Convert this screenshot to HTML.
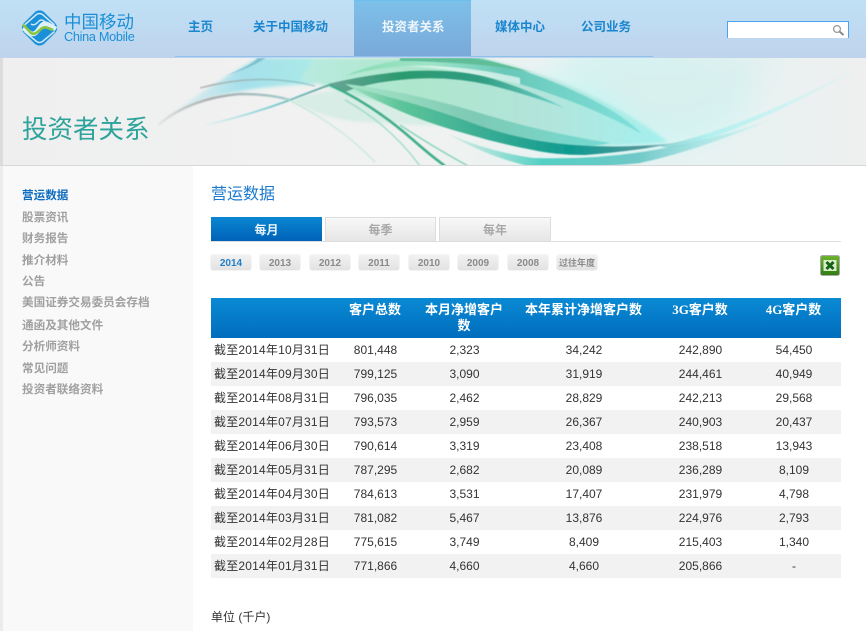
<!DOCTYPE html>
<html lang="zh"><head><meta charset="utf-8"><title>营运数据</title>
<style>
html,body{margin:0;padding:0;background:#fff}
body{width:866px;height:631px;position:relative;overflow:hidden;font-family:"Liberation Sans","Noto Sans CJK SC",sans-serif}
.a{position:absolute;white-space:nowrap}
.nav{top:19px;font-size:12.5px;line-height:16px;font-weight:bold;color:#1a86cf}
.side{left:22px;font-size:11.6px;line-height:14px;font-weight:bold;color:#a0a0a0}
.tab{top:217px;height:24px;line-height:27px;text-align:center;font-size:12px;font-weight:bold;box-sizing:border-box}
.off{background:linear-gradient(#f8f8f8,#e6e6e6);border:1px solid #ddd;border-bottom:0;color:#a8a8a8;line-height:25px}
.yr{top:255px;height:15px;line-height:17px;text-align:center;font-size:10px;font-weight:bold;color:#8a8a8a;background:linear-gradient(#f2f2f2,#e2e2e2);border-radius:2px;box-shadow:0 0 1px #bbb}
table{position:absolute;left:211px;top:298px;width:630px;border-collapse:collapse;table-layout:fixed;font-size:12px;color:#333}
th{height:36px;padding:4px 0 0;vertical-align:top;color:#fff;line-height:16px;font-size:13px;text-align:center;font-family:"Liberation Serif","Noto Sans CJK SC",serif}
thead tr{background:linear-gradient(#0a8ad4,#006dbd)}
td{height:24px;padding:0 0 0 1px;text-align:center;line-height:24px}
td:first-child{text-align:left;padding-left:3px;letter-spacing:.2px}
tbody tr:nth-child(even){background:#f2f2f2}
</style></head><body>

<div class="a" style="left:0;top:0;width:866px;height:58px;background:linear-gradient(#bfe1f5,#bfd3ec)"></div>
<svg class="a" style="left:20px;top:9px" width="40" height="38" viewBox="0 0 40 38">
<rect x="5" y="4.5" width="29" height="29" rx="7" fill="#1a90d9" transform="rotate(45 19.5 19)"/>
<g fill="none">
<path d="M4.5 16 L16.5 5.5 Q19.5 3.5 22.5 5.5 L34.5 16" stroke="#cfe8f6" stroke-width="1.5"/>
<path d="M4.5 22.5 L16.5 32.5 Q19.5 34.5 22.5 32.5 L34.5 22.5" stroke="#cfe8f6" stroke-width="1.5"/>
<path d="M3 19 L11 24.5 Q14 26 17 22.5 L21.5 16.5 Q24.5 13.5 28 15.5 L36 20" stroke="#dff0f9" stroke-width="4.6"/>
<path d="M3 15.5 L11 24 Q14 26 17.5 23 L21.5 19.5 Q24.5 17.5 28 19 L33 21" stroke="#8cc63f" stroke-width="2.6"/>
<path d="M11 15 Q14 17 17 14 L19 12 Q21 10 24 12 L27 14" stroke="#cfe8f6" stroke-width="1.4"/>
</g></svg>
<div class="a" style="left:64px;top:11px;font-size:17.5px;line-height:22px;color:#1a8fd8">中国移动</div>
<div class="a" style="left:64px;top:30px;font-size:12.7px;line-height:15px;color:#1a8fd8;letter-spacing:-.3px">China Mobile</div>

<div class="a" style="left:175px;top:56px;width:478px;height:1px;background:#8fc1ec"></div>
<div class="a" style="left:354px;top:0;width:117px;height:56px;background:linear-gradient(#7cc0e8,#7aa9d9);border-top:1px solid #6cc0f0;box-sizing:border-box"></div>
<div class="a nav" style="left:188px">主页</div>
<div class="a nav" style="left:253px">关于中国移动</div>
<div class="a nav" style="left:382px;color:#eef6fc">投资者关系</div>
<div class="a nav" style="left:495px">媒体中心</div>
<div class="a nav" style="left:581px">公司业务</div>

<div class="a" style="left:727px;top:21px;width:122px;height:17px;box-sizing:border-box;background:#fff;border:1px solid #4aa3f2;border-bottom:0"></div>
<svg class="a" style="left:832px;top:24px" width="13" height="12" viewBox="0 0 13 12"><circle cx="5" cy="5" r="3.4" fill="#fff" stroke="#999" stroke-width="1.3"/><path d="M7.6 7.6 L11.5 11" stroke="#888" stroke-width="2"/></svg>

<!-- banner -->
<svg class="a" style="left:0;top:58px" width="866" height="108" viewBox="0 58 866 108">
<defs>
<linearGradient id="bg" gradientUnits="userSpaceOnUse" x1="0" x2="866" y1="0" y2="0"><stop offset="0" stop-color="#efefef"/><stop offset=".5" stop-color="#f0f2f1"/><stop offset=".72" stop-color="#e4f3f2"/><stop offset=".9" stop-color="#eaf1f1"/><stop offset="1" stop-color="#efefef"/></linearGradient>
<radialGradient id="gl" cx=".5" cy=".5" r=".5"><stop offset="0" stop-color="#b8f8f6"/><stop offset="1" stop-color="#b8f8f6" stop-opacity="0"/></radialGradient>
<linearGradient id="lens" gradientUnits="userSpaceOnUse" x1="300" x2="665" y1="0" y2="0"><stop offset="0" stop-color="#b9ebe0"/><stop offset=".3" stop-color="#aee6cc"/><stop offset=".65" stop-color="#b2e4da"/><stop offset="1" stop-color="#a4f0ee"/></linearGradient>
<linearGradient id="top" gradientUnits="userSpaceOnUse" x1="340" x2="640" y1="0" y2="0"><stop offset="0" stop-color="#86dcb0"/><stop offset=".3" stop-color="#9fe4c8"/><stop offset=".55" stop-color="#68c8b8"/><stop offset="1" stop-color="#80e0dc"/></linearGradient>
<linearGradient id="wisp" gradientUnits="userSpaceOnUse" x1="160" x2="340" y1="0" y2="0"><stop offset="0" stop-color="#a8dfe8" stop-opacity="0"/><stop offset=".45" stop-color="#93dcea" stop-opacity=".8"/><stop offset="1" stop-color="#aeeee6"/></linearGradient>
<linearGradient id="gray" gradientUnits="userSpaceOnUse" x1="150" x2="300" y1="0" y2="0"><stop offset="0" stop-color="#aaa" stop-opacity="0"/><stop offset=".4" stop-color="#b0b0b0"/><stop offset="1" stop-color="#7db8bc" stop-opacity=".6"/></linearGradient>
<linearGradient id="line" gradientUnits="userSpaceOnUse" x1="200" x2="340" y1="0" y2="0"><stop offset="0" stop-color="#8fdce8" stop-opacity="0"/><stop offset=".5" stop-color="#80ccd4"/><stop offset="1" stop-color="#5c9c90"/></linearGradient>
<linearGradient id="strip" gradientUnits="userSpaceOnUse" x1="330" x2="560" y1="0" y2="0"><stop offset="0" stop-color="#6aa496"/><stop offset=".3" stop-color="#2c9a70"/><stop offset=".65" stop-color="#2f9c82"/><stop offset="1" stop-color="#70d0c8"/></linearGradient>
<linearGradient id="bu" gradientUnits="userSpaceOnUse" x1="350" x2="620" y1="0" y2="0"><stop offset="0" stop-color="#a6e4c8"/><stop offset=".45" stop-color="#7ecab4"/><stop offset="1" stop-color="#74dcd6"/></linearGradient>
<linearGradient id="band" gradientUnits="userSpaceOnUse" x1="350" x2="690" y1="0" y2="0"><stop offset="0" stop-color="#a0dfc0"/><stop offset=".15" stop-color="#5cc49a"/><stop offset=".38" stop-color="#3cae94"/><stop offset=".65" stop-color="#0e9a90"/><stop offset=".87" stop-color="#56979a"/><stop offset="1" stop-color="#aee" stop-opacity=".4"/></linearGradient>
<linearGradient id="low" gradientUnits="userSpaceOnUse" x1="440" x2="780" y1="0" y2="0"><stop offset="0" stop-color="#bfe8da" stop-opacity=".5"/><stop offset=".3" stop-color="#52d0c4"/><stop offset=".58" stop-color="#70c8c8"/><stop offset="1" stop-color="#b5f5f5" stop-opacity=".2"/></linearGradient>
<linearGradient id="tail" gradientUnits="userSpaceOnUse" x1="640" x2="866" y1="0" y2="0"><stop offset="0" stop-color="#6ab8b8"/><stop offset=".3" stop-color="#a5efef"/><stop offset="1" stop-color="#c0f6f6" stop-opacity=".3"/></linearGradient>
<filter id="b1" x="-5%" y="-5%" width="110%" height="110%"><feGaussianBlur stdDeviation=".6"/></filter>
<filter id="b2" x="-5%" y="-5%" width="110%" height="110%"><feGaussianBlur stdDeviation="1.5"/></filter>
<filter id="b3" x="-10%" y="-10%" width="120%" height="120%"><feGaussianBlur stdDeviation="14"/></filter>
<clipPath id="c"><rect x="0" y="58" width="866" height="107"/></clipPath>
</defs>
<rect x="0" y="58" width="866" height="107" fill="url(#bg)"/>
<rect x="0" y="58" width="3" height="107" fill="#dcdcdc"/>
<rect x="0" y="165" width="866" height="1" fill="#d8d8d8"/>
<g clip-path="url(#c)">
<ellipse cx="640" cy="100" rx="130" ry="62" fill="url(#gl)"/>
<path d="M560 58 L780 58 L700 130 L640 130Z" fill="#d8f0ee" filter="url(#b3)"/>
<g filter="url(#b2)">
<path d="M165 118 Q210 85 258 58 L350 58 Q330 70 315 84 Q260 85 215 97 Q190 105 165 118 Z" fill="url(#wisp)"/>
<path d="M315 58 L480 58 Q545 72 600 100 Q640 120 668 142 Q600 150 540 140 Q470 120 400 108 Q360 96 330 88 Q315 82 300 80 Z" fill="url(#lens)"/>
<path d="M290 100 Q330 88 350 92 Q395 108 440 126 Q400 124 360 122 Q320 118 290 100Z" fill="#cdebe0" opacity=".7"/>
</g>
<g filter="url(#b1)">
<path d="M345 76 Q375 62 420 58 L480 58 Q535 72 585 96 Q625 116 642 134 Q590 105 520 84 Q460 66 405 66 Q375 68 345 76Z" fill="url(#top)"/>
<path d="M400 58 L470 58 Q500 62 530 72 Q480 62 400 61Z" fill="#5fbe98"/>
<path d="M405 66 Q460 64 520 78 L520 84 Q460 68 405 66Z" fill="#f0fbf8" opacity=".7"/>
<path d="M225 76 Q250 66 258 58 L266 58 Q250 68 225 76Z" fill="#6fb8c8" opacity=".8"/>
<path d="M200 88 Q260 72 315 86" fill="none" stroke="url(#gray)" stroke-width="1.6"/>
<path d="M158 125 Q190 98 240 94 Q270 94 290 100" fill="none" stroke="url(#gray)" stroke-width="2.6"/>
<path d="M205 125 Q250 115 290 100 Q310 92 332 84" fill="none" stroke="url(#line)" stroke-width="1.8"/>
<path d="M328 84 Q370 74 410 71 Q460 69 490 78 Q525 88 565 108 Q525 94 490 85 Q450 76 410 79 Q370 82 345 92Z" fill="url(#strip)"/>
<path d="M345 84 Q400 90 470 110 Q540 132 610 143 Q580 150 533 146 Q480 134 430 118 Q385 102 345 84Z" fill="url(#bu)"/>
<path d="M345 84 Q370 92 400 100 Q430 108 467 121 Q500 134 540 141 Q610 152 690 141 Q630 152 585 155 Q555 155 533 150 Q500 144 467 134 Q430 124 400 111 Q370 98 345 84 Z" fill="url(#band)"/>
<path d="M330 85 Q372 104 412 139 Q430 155 445 166" fill="none" stroke="#3fae88" stroke-width="2.6"/>
<path d="M345 100 Q390 125 420 166" fill="none" stroke="#7cd0b0" stroke-width="1.5" opacity=".6"/>
<path d="M400 125 Q430 145 468 166" fill="none" stroke="#5cc8a8" stroke-width="1.5" opacity=".7"/>
<path d="M285 98 Q340 125 375 162" fill="none" stroke="#b8e6d6" stroke-width="1.3" opacity=".7"/>
<path d="M448 134 Q490 152 533 158 Q600 160 660 149 Q720 138 775 118 Q700 150 640 163 Q590 168 533 167 Q490 158 448 134Z" fill="url(#low)"/>
<path d="M660 146 Q740 130 866 64 Q760 125 690 144 Q670 150 660 146Z" fill="url(#tail)" opacity=".75"/>
</g>
</g>
</svg>
<div class="a" style="left:22px;top:114px;font-size:25.5px;line-height:32px;color:#2ea39c">投资者关系</div>

<!-- sidebar -->
<div class="a" style="left:0;top:166px;width:3px;height:465px;background:#ececec"></div>
<div class="a" style="left:3px;top:166px;width:190px;height:465px;background:#f9f9f9"></div>
<div class="a side" style="top:189px;color:#0d6cc0">营运数据</div>
<div class="a side" style="top:211px">股票资讯</div>
<div class="a side" style="top:232px">财务报告</div>
<div class="a side" style="top:254px">推介材料</div>
<div class="a side" style="top:275px">公告</div>
<div class="a side" style="top:296px">美国证券交易委员会存档</div>
<div class="a side" style="top:319px">通函及其他文件</div>
<div class="a side" style="top:340px">分析师资料</div>
<div class="a side" style="top:362px">常见问题</div>
<div class="a side" style="top:383px">投资者联络资料</div>

<!-- main -->
<div class="a" style="left:211px;top:185px;font-size:16px;line-height:20px;color:#1b79cf">营运数据</div>
<div class="a" style="left:211px;top:241px;width:630px;height:1px;background:#ddd"></div>
<div class="a tab" style="left:211px;width:111px;background:linear-gradient(#0a86d2,#0062b8);color:#e8f3fb">每月</div>
<div class="a tab off" style="left:325px;width:111px">每季</div>
<div class="a tab off" style="left:439px;width:112px">每年</div>

<div class="a yr" style="left:211px;width:40px;color:#1f7fc8">2014</div>
<div class="a yr" style="left:260px;width:40px">2013</div>
<div class="a yr" style="left:310px;width:40px">2012</div>
<div class="a yr" style="left:359px;width:40px">2011</div>
<div class="a yr" style="left:409px;width:40px">2010</div>
<div class="a yr" style="left:458px;width:40px">2009</div>
<div class="a yr" style="left:508px;width:40px">2008</div>
<div class="a yr" style="left:557px;width:40px;font-size:9px">过往年度</div>

<svg class="a" style="left:820px;top:255px" width="20" height="21" viewBox="0 0 20 21">
<defs><linearGradient id="xl" x1="0" x2="0" y1="0" y2="1"><stop offset="0" stop-color="#6fb52e"/><stop offset="1" stop-color="#2f7a14"/></linearGradient></defs>
<rect x=".5" y=".5" width="19" height="20" rx="2" fill="url(#xl)" stroke="#aaa"/>
<rect x="3.5" y="5" width="13" height="11" fill="#d8efc8"/>
<path d="M6.5 7 L13.5 14 M13.5 7 L6.5 14" stroke="#17601a" stroke-width="3"/>
</svg>

<table>
<colgroup><col style="width:124px"><col style="width:80px"><col style="width:98px"><col style="width:141px"><col style="width:92px"><col style="width:95px"></colgroup>
<thead><tr><th></th><th>客户总数</th><th style="padding-left:5px;padding-right:5px">本月净增客户数</th><th>本年累计净增客户数</th><th>3G客户数</th><th>4G客户数</th></tr></thead>
<tbody>
<tr><td>截至2014年10月31日</td><td>801,448</td><td>2,323</td><td>34,242</td><td>242,890</td><td>54,450</td></tr>
<tr><td>截至2014年09月30日</td><td>799,125</td><td>3,090</td><td>31,919</td><td>244,461</td><td>40,949</td></tr>
<tr><td>截至2014年08月31日</td><td>796,035</td><td>2,462</td><td>28,829</td><td>242,213</td><td>29,568</td></tr>
<tr><td>截至2014年07月31日</td><td>793,573</td><td>2,959</td><td>26,367</td><td>240,903</td><td>20,437</td></tr>
<tr><td>截至2014年06月30日</td><td>790,614</td><td>3,319</td><td>23,408</td><td>238,518</td><td>13,943</td></tr>
<tr><td>截至2014年05月31日</td><td>787,295</td><td>2,682</td><td>20,089</td><td>236,289</td><td>8,109</td></tr>
<tr><td>截至2014年04月30日</td><td>784,613</td><td>3,531</td><td>17,407</td><td>231,979</td><td>4,798</td></tr>
<tr><td>截至2014年03月31日</td><td>781,082</td><td>5,467</td><td>13,876</td><td>224,976</td><td>2,793</td></tr>
<tr><td>截至2014年02月28日</td><td>775,615</td><td>3,749</td><td>8,409</td><td>215,403</td><td>1,340</td></tr>
<tr><td>截至2014年01月31日</td><td>771,866</td><td>4,660</td><td>4,660</td><td>205,866</td><td>-</td></tr>
</tbody></table>
<div class="a" style="left:211px;top:609px;font-size:12px;line-height:16px;color:#333">单位 (千户)</div>
</body></html>
